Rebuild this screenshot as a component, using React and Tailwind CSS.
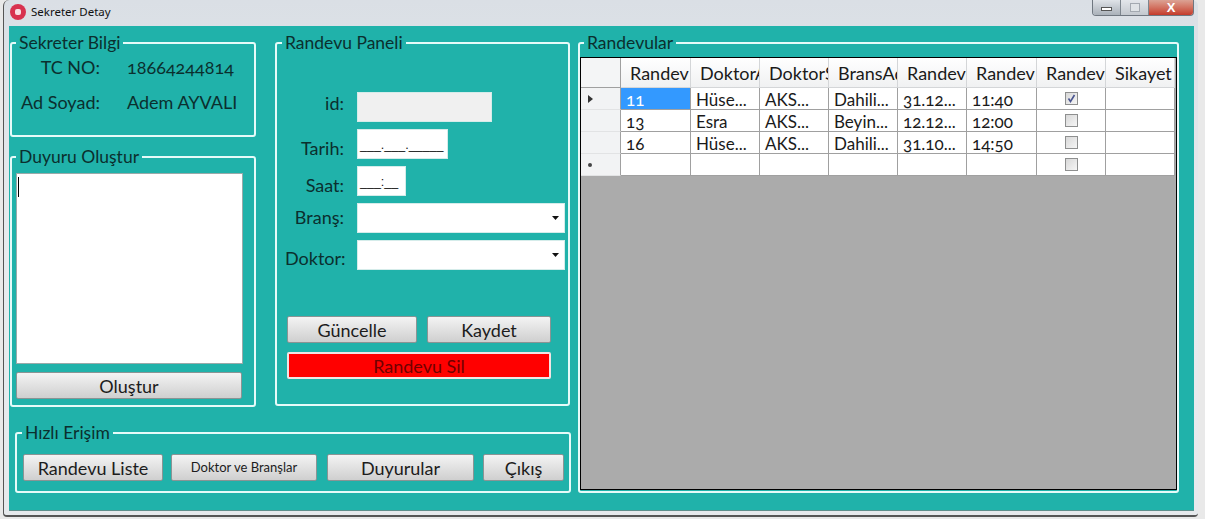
const rows = [
  { id: '11', ad: 'Hüse...', soyad: 'AKS...', brans: 'Dahili...', tarih: '31.12...', saat: '11:40', durum: true, active: true },
  { id: '13', ad: 'Esra', soyad: 'AKS...', brans: 'Beyin...', tarih: '12.12...', saat: '12:00' },
  { id: '16', ad: 'Hüse...', soyad: 'AKS...', brans: 'Dahili...', tarih: '31.10...', saat: '14:50' },
  { id: '', ad: '', soyad: '', brans: '', tarih: '', saat: '', isNew: true },
];

const headers = ['Randev', 'DoktorAd', 'DoktorSoyad', 'BransAd', 'Randev', 'Randev', 'Randev', 'Sikayet'];

const Group = ({ title, className, legendClass = 'ml-[4px]', children }) => (
  <fieldset className={`border-2 border-[#e6fbf9] rounded-[3px] p-0 m-0 min-w-0 ${className}`}>
    <legend className={`px-[3px] h-[20px] leading-[20px] text-[17.5px] text-[#0b2f2e] ${legendClass}`}>{title}</legend>
    {children}
  </fieldset>
);

const Button = ({ className, children }) => (
  <button className={`h-[27px] rounded-[2px] border border-[#8a9494] bg-gradient-to-b from-[#f4f4f4] to-[#cfcfcf] text-[18px] leading-none text-[#1c1c1c] ${className}`}>
    {children}
  </button>
);

const Field = ({ label, labelClass, className, arrow, children }) => (
  <div className="flex items-center h-[30px]">
    <span className={`w-[59px] text-right text-[18px] whitespace-nowrap text-[#0b2f2e] shrink-0 ${labelClass}`}>{label}</span>
    <div className={`ml-[13px] h-[30px] bg-white border border-[#d5ecea] flex items-center justify-between ${className}`}>
      {children}
      {arrow && (
        <svg width="7" height="4" viewBox="0 0 7 4" className="ml-auto mr-[5px]">
          <polygon points="0,0 7,0 3.5,4" fill="#111" />
        </svg>
      )}
    </div>
  </div>
);

const Check = ({ checked }) => (
  <span className="w-[13px] h-[13px] border border-[#8e8f8f] bg-gradient-to-br from-[#d8d8d8] to-[#f6f6f6] flex items-center justify-center">
    {checked && (
      <svg width="9" height="9" viewBox="0 0 9 9">
        <path d="M1.5 4.5 L3.5 7.5 L7.5 1" fill="none" stroke="#4a5590" strokeWidth="1.6" />
      </svg>
    )}
  </span>
);

const Cell = ({ active, children }) => (
  <div className={`h-[22px] border-r border-b border-[#a0a0a0] pl-[5px] pr-[1px] text-[17px] leading-[24px] overflow-hidden whitespace-nowrap oldstyle-nums ${active ? 'bg-[#3399ff] text-white' : 'bg-white text-[#1a1a1a]'}`}>
    {children}
  </div>
);

const App = () => {
  return (
    <div className="w-[1205px] h-[519px] overflow-hidden bg-[#e9e9e9] font-['Lato',sans-serif]">
      <div className="ml-[3px] mr-[7px] h-[517px] bg-gradient-to-b from-[#dadfe5] via-[#e8ebee] to-[#e6e9ec] rounded-t-[6px] rounded-b-[4px] border-l border-b-2 border-[#555] flex flex-col">
        {/* title bar */}
        <div className="h-[26px] shrink-0 flex items-start pl-[6px]">
          <span className="mt-[4px] w-[16px] h-[16px] rounded-full bg-[#d8324f] flex items-center justify-center">
            <span className="w-[6px] h-[6px] rounded-[2px] bg-[#f7dfe3]" />
          </span>
          <span className="ml-[5px] mt-[4px] text-[11.5px] leading-[16px] text-[#111] font-['Noto_Sans',sans-serif]">Sekreter Detay</span>
          <div className="ml-auto mr-[4px] flex h-[16px] w-[102px] rounded-b-[4px] overflow-hidden border border-t-0 border-[#6f7780]">
            <div className="w-[28px] bg-gradient-to-b from-[#dfe3e8] to-[#aab1b9] flex items-center justify-center border-r border-[#7d858d]">
              <span className="w-[11px] h-[4px] mt-[3px] bg-white border border-[#555]" />
            </div>
            <div className="w-[28px] bg-gradient-to-b from-[#e3e6ea] to-[#c3c8ce] flex items-center justify-center border-r border-[#7d858d]">
              <span className="w-[10px] h-[9px] border border-[#a3a9b0] bg-[#dfe3e6]" />
            </div>
            <div className="flex-1 bg-gradient-to-b from-[#dba294] to-[#c4392a] flex items-center justify-center">
              <span className="text-white font-bold text-[13px] leading-none font-['Liberation_Sans',sans-serif]">X</span>
            </div>
          </div>
        </div>

        {/* form body */}
        <div className="ml-[5px] mr-[4px] h-[485px] bg-[#20b2aa] border-b border-[#5d8f8c] pt-[7px] pl-[1px] flex">
          <div className="w-[561px] shrink-0">
            <div className="flex">
              <div className="w-[246px] shrink-0">
                <Group title="Sekreter Bilgi" className="h-[104px]">
                  <div className="grid grid-cols-[88px_1fr] gap-x-[27px] gap-y-[14px] text-[18px] leading-[21px] text-[#0b2f2e] pt-[4px]">
                    <span className="text-right">TC NO:</span>
                    <span className="oldstyle-nums">18664244814</span>
                    <span className="text-right">Ad Soyad:</span>
                    <span>Adem AYVALI</span>
                  </div>
                </Group>
                <Group title="Duyuru Oluştur" className="h-[260px] mt-[10px]">
                  <div className="mx-[4px] mt-[6px] w-[227px] h-[191px] bg-white border border-[#9aa] pt-[3px] pl-[1px]">
                    <div className="w-px h-[20px] bg-black" />
                  </div>
                  <Button className="block mx-[4px] mt-[8px] w-[226px]">Oluştur</Button>
                </Group>
              </div>
              <Group title="Randevu Paneli" legendClass="ml-[5px]" className="w-[295px] h-[373px] ml-[19px]">
                <div className="pt-[39px] pl-[8px]">
                  <div className="flex flex-col gap-[7px]">
                    <Field label="id:" labelClass="-mt-[8px]" className="w-[135px] !bg-[#f0f0f0]" />
                    <Field label="Tarih:" labelClass="mt-[8px]" className="w-[91px] pl-[2px]">
                      <span className="font-['Liberation_Sans',sans-serif] text-[12.5px] leading-none mt-[2px] text-[#111] whitespace-nowrap">___.___._____</span>
                    </Field>
                    <Field label="Saat:" labelClass="mt-[8px]" className="w-[49px] pl-[2px]">
                      <span className="font-['Liberation_Sans',sans-serif] text-[12.5px] leading-none mt-[2px] text-[#111] whitespace-nowrap">___:__</span>
                    </Field>
                    <Field label="Branş:" labelClass="-mt-[2px]" className="w-[208px]" arrow />
                    <Field label="Doktor:" labelClass="mt-[6px]" className="w-[208px]" arrow />
                  </div>
                  <div className="flex gap-[10px] mt-[46px] ml-[2px]">
                    <Button className="w-[130px]">Güncelle</Button>
                    <Button className="w-[124px]">Kaydet</Button>
                  </div>
                  <button className="block ml-[2px] mt-[9px] w-[264px] h-[27px] bg-[#ff0000] border-2 border-[#f2e4e4] rounded-[2px] text-[18px] leading-none text-[#700000]">
                    Randevu Sil
                  </button>
                </div>
              </Group>
            </div>
            <Group title="Hızlı Erişim" legendClass="ml-[5px]" className="h-[70px] ml-[5px] mt-[16px] w-[556px]">
              <div className="flex pl-[6px] pt-[11px]">
                <Button className="w-[140px]">Randevu Liste</Button>
                <Button className="w-[146px] ml-[8px] !text-[13px]">Doktor ve Branşlar</Button>
                <Button className="w-[147px] ml-[10px]">Duyurular</Button>
                <Button className="w-[81px] ml-[9px]">Çıkış</Button>
              </div>
            </Group>
          </div>

          <Group title="Randevular" className="w-[601px] h-[460px] ml-[7px]">
            <div className="mt-[4px] w-[597px] h-[433px] border border-black bg-[#ababab]">
              <div className="grid grid-cols-[40px_70px_69px_69px_69px_69px_70px_69px_69px]">
                <div className="h-[30px] bg-[#f4f5f6] border-r border-b border-[#a0a0a0]" />
                {headers.map((h, i) => (
                  <div key={i} className="h-[30px] bg-gradient-to-b from-white to-[#f0f1f2] border-r border-b border-[#d4d6d8] pl-[9px] text-[18px] leading-[31px] overflow-hidden whitespace-nowrap text-[#1a1a1a]">
                    {h}
                  </div>
                ))}
                {rows.map((r, i) => (
                  <div key={i} className="contents">
                    <div className="h-[22px] bg-[#f2f3f4] border-r border-b border-[#e2e3e4] border-r-[#a0a0a0] flex items-center pl-[7px]">
                      {r.active && (
                        <svg width="5" height="8" viewBox="0 0 5 8">
                          <polygon points="0,0 5,4 0,8" fill="#333" />
                        </svg>
                      )}
                      {r.isNew && <span className="w-[4px] h-[4px] rounded-full bg-[#444]" />}
                    </div>
                    <Cell active={r.active}>{r.id}</Cell>
                    <Cell>{r.ad}</Cell>
                    <Cell>{r.soyad}</Cell>
                    <Cell>{r.brans}</Cell>
                    <Cell>{r.tarih}</Cell>
                    <Cell>{r.saat}</Cell>
                    <div className="h-[22px] bg-white border-r border-b border-[#a0a0a0] flex items-center justify-center">
                      <Check checked={r.durum} />
                    </div>
                    <Cell />
                  </div>
                ))}
              </div>
            </div>
          </Group>
        </div>
      </div>
    </div>
  );
};

export default App;
